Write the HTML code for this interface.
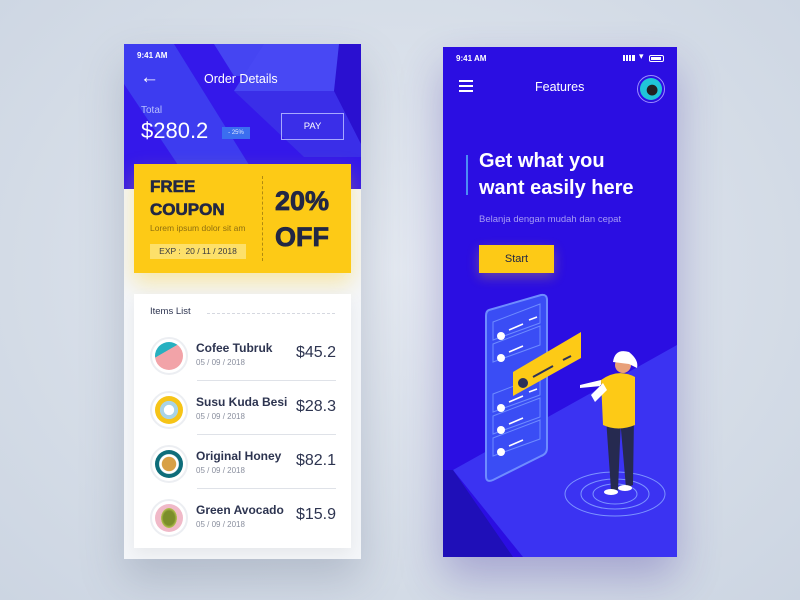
<!DOCTYPE html>
<html><head><style>
*{margin:0;padding:0;box-sizing:border-box}
body{width:800px;height:600px;overflow:hidden;background:radial-gradient(ellipse at 50% 45%,#e4e9f1 0%,#d3dbe6 70%,#ccd5e2 100%);font-family:"Liberation Sans",sans-serif;position:relative}
.a{position:absolute}
.p1{left:124px;top:44px;width:237px;height:515px;background:#f4f6f9;overflow:hidden;box-shadow:0 20px 40px rgba(80,90,120,.25)}
.p2{left:443px;top:47px;width:234px;height:510px;background:#2b0ee2;overflow:hidden;box-shadow:0 20px 40px rgba(60,40,160,.3)}
.w{color:#fff}
.item{position:absolute;left:26px;width:186px;height:54px}
.ic{position:absolute;left:0;top:0;width:38px;height:38px;border-radius:50%;border:2px solid #eceef2;background:#fff}
.ic i{position:absolute;left:3px;top:3px;width:28px;height:28px;border-radius:50%}
.nm{position:absolute;left:46px;top:4px;font-size:12px;font-weight:bold;color:#2d3450}
.dt{position:absolute;left:46px;top:21px;font-size:8px;color:#8a8f9e}
.pr{position:absolute;right:0;top:7px;font-size:16px;color:#2d3450}
.ln{position:absolute;left:47px;right:0;top:43px;height:1px;background:#dfe2e8}
</style></head><body>
<div class="a p1">
 <svg class="a" style="left:0;top:0" width="237" height="145">
  <rect width="237" height="145" fill="#3418ea"/>
  <polygon points="0,0 50,0 140,145 70,145 0,40" fill="#3d3cf0"/>
  <polygon points="120,0 237,0 237,0 200,0 165,32 110,32" fill="#4a4af4"/>
  <polygon points="90,0 237,0 237,0 220,0 180,32 110,32" fill="#4545f2"/>
  <polygon points="140,0 237,0 237,15 210,47 110,47" fill="#4848f4"/>
  <polygon points="110,47 210,47 237,80 237,113 180,113" fill="#3a2ee8"/>
  <polygon points="215,0 237,0 237,100 210,47" fill="#2a10d0"/>
 </svg>
 <div class="a w" style="left:13px;top:7px;font-size:8px;font-weight:bold">9:41 AM</div>
 <div class="a w" style="left:16px;top:23px;font-size:19px">&#8592;</div>
 <div class="a w" style="left:80px;top:28px;font-size:12.5px">Order Details</div>
 <div class="a" style="left:17px;top:61px;font-size:10px;color:#b8c0ff">Total</div>
 <div class="a w" style="left:17px;top:74px;font-size:22px">$280.2</div>
 <div class="a" style="left:98px;top:83px;width:28px;height:12px;background:#3b6ef0;color:#dfe8ff;font-size:6px;text-align:center;line-height:12px">- 25%</div>
 <div class="a w" style="left:157px;top:69px;width:63px;height:27px;border:1px solid #a7a8ff;font-size:9.5px;text-align:center;line-height:25px">PAY</div>
 <div class="a" style="left:10px;top:120px;width:217px;height:109px;background:#fdca16;box-shadow:0 10px 20px rgba(253,202,22,.35)">
  <div class="a" style="left:16px;top:11px;font-size:17px;font-weight:bold;color:#222744;line-height:23px;-webkit-text-stroke:0.6px #222744">FREE<br>COUPON</div>
  <div class="a" style="left:16px;top:59px;font-size:8.5px;color:#8f6f10">Lorem ipsum dolor sit am</div>
  <div class="a" style="left:16px;top:80px;width:96px;height:15px;background:#fde06a;font-size:8.5px;color:#3a3a40;text-align:center;line-height:15px">EXP :&nbsp; 20 / 11 / 2018</div>
  <div class="a" style="left:128px;top:12px;height:85px;border-left:1px dashed #b08a10"></div>
  <div class="a" style="left:141px;top:19px;font-size:27px;font-weight:bold;color:#222744;line-height:36px;-webkit-text-stroke:0.8px #222744">20%<br>OFF</div>
 </div>
 <div class="a" style="left:10px;top:250px;width:217px;height:254px;background:#fff;box-shadow:0 6px 16px rgba(0,0,0,.06)">
  <div class="a" style="left:16px;top:12px;font-size:9.5px;color:#2d3450">Items List</div>
  <div class="a" style="left:73px;top:19px;width:128px;border-top:1px dashed #d5d8e0"></div>
  <div class="item" style="top:43px;left:16px"><div class="ic"><i style="background:linear-gradient(150deg,#27b0c0 35%,#f2a3a8 36%)"></i></div><div class="nm">Cofee Tubruk</div><div class="dt">05 / 09 / 2018</div><div class="pr">$45.2</div><div class="ln"></div></div>
  <div class="item" style="top:97px;left:16px"><div class="ic"><i style="background:radial-gradient(circle,#fff 25%,#a9d3e6 27%,#a9d3e6 45%,#f6c417 47%)"></i></div><div class="nm">Susu Kuda Besi</div><div class="dt">05 / 09 / 2018</div><div class="pr">$28.3</div><div class="ln"></div></div>
  <div class="item" style="top:151px;left:16px"><div class="ic"><i style="background:radial-gradient(circle,#d8a046 35%,#fff 38%,#fff 48%,#0e6d7a 52%)"></i></div><div class="nm">Original Honey</div><div class="dt">05 / 09 / 2018</div><div class="pr">$82.1</div><div class="ln"></div></div>
  <div class="item" style="top:205px;left:16px"><div class="ic"><i style="background:radial-gradient(ellipse 40% 50% at 50% 50%,#7b8e2a 50%,#b6c254 70%,#f0b9c8 72%)"></i></div><div class="nm">Green Avocado</div><div class="dt">05 / 09 / 2018</div><div class="pr">$15.9</div></div>
 </div>
</div>

<div class="a p2">
 <div class="a w" style="left:13px;top:7px;font-size:8px;font-weight:bold">9:41 AM</div>
 <div class="a" style="left:180px;top:8px;width:12px;height:6px;background:linear-gradient(90deg,#fff 0 2px,transparent 2px 3px,#fff 3px 5px,transparent 5px 6px,#fff 6px 8px,transparent 8px 9px,#fff 9px)"></div>
 <div class="a w" style="left:196px;top:4px;font-size:9px">&#9662;</div>
 <div class="a" style="left:206px;top:8px;width:15px;height:7px;border:1px solid #fff;border-radius:2px;padding:1px"><div style="background:#fff;width:10px;height:3px"></div></div>
 <div class="a" style="left:16px;top:33px;width:14px;height:12px;border-top:2px solid #fff;border-bottom:2px solid #fff"><div style="margin-top:3px;height:2px;background:#fff"></div></div>
 <div class="a w" style="left:92px;top:33px;font-size:12.5px">Features</div>
 <div class="a" style="left:194px;top:28px;width:28px;height:28px;border-radius:50%;border:1px solid #9c8cff;padding:2px"><div style="width:22px;height:22px;border-radius:50%;background:radial-gradient(circle at 55% 55%,#222 30%,#20c5d8 33%)"></div></div>
 <div class="a" style="left:23px;top:108px;width:2px;height:40px;background:#4c8df5"></div>
 <div class="a w" style="left:36px;top:101px;font-size:20px;font-weight:bold;line-height:27px">Get what you<br>want easily here</div>
 <div class="a" style="left:36px;top:167px;font-size:9.5px;color:#a79cf5">Belanja dengan mudah dan cepat</div>
 <div class="a" style="left:36px;top:198px;width:75px;height:28px;background:#fdca16;color:#222744;font-size:11px;text-align:center;line-height:28px;box-shadow:0 4px 12px rgba(253,202,22,.3)">Start</div>
 <svg class="a" style="left:0;top:233px" width="234" height="277" viewBox="0 0 234 277">
  <polygon points="10,190 234,65 234,277 80,277" fill="#3b33f2"/>
  <polygon points="10,190 0,190 0,277 70,277" fill="#1f0fb8"/>
  <ellipse cx="172" cy="214" rx="50" ry="22" fill="none" stroke="#7c93ff" stroke-width="1"/>
  <ellipse cx="172" cy="214" rx="34" ry="15" fill="none" stroke="#7c93ff" stroke-width="1"/>
  <ellipse cx="172" cy="214" rx="22" ry="10" fill="none" stroke="#7c93ff" stroke-width="1"/>
  <path d="M46,30 L98,15 Q104,14 104,20 L104,168 Q104,174 98,176 L50,200 Q43,203 43,196 L43,36 Q43,31 46,30Z" fill="#3a4df5" stroke="#6e8cff" stroke-width="2"/>
  <g fill="none" stroke="#6e8cff" stroke-width="1">
   <path d="M50,42 L97,24 L97,43 L50,60Z"/><path d="M50,64 L97,46 L97,65 L50,82Z"/>
   <path d="M50,114 L97,96 L97,115 L50,132Z"/><path d="M50,136 L97,118 L97,137 L50,154Z"/><path d="M50,158 L97,140 L97,159 L50,176Z"/>
  </g>
  <g fill="#fff">
   <circle cx="58" cy="56" r="4"/><circle cx="58" cy="78" r="4"/><circle cx="58" cy="128" r="4"/><circle cx="58" cy="150" r="4"/><circle cx="58" cy="172" r="4"/>
  </g>
  <g stroke="#fff" stroke-width="1.5"><line x1="66" y1="50" x2="80" y2="44"/><line x1="66" y1="72" x2="80" y2="66"/><line x1="66" y1="122" x2="80" y2="116"/><line x1="66" y1="144" x2="80" y2="138"/><line x1="66" y1="166" x2="80" y2="160"/><line x1="86" y1="40" x2="94" y2="37"/><line x1="86" y1="112" x2="94" y2="109"/></g>
  <polygon points="70,92 138,52 138,78 70,116" fill="#fdca16"/>
  <circle cx="80" cy="103" r="5" fill="#2d3158"/>
  <line x1="90" y1="97" x2="110" y2="86" stroke="#2d3158" stroke-width="2"/>
  <line x1="120" y1="80" x2="128" y2="76" stroke="#2d3158" stroke-width="2"/>
  <path d="M177,138 L191,138 L190,205 L183,208Z M163,138 L178,138 L175,210 L168,210Z" fill="#262a50"/>
  <path d="M158,100 Q175,88 192,97 L192,145 Q175,152 160,145Z" fill="#fdca16"/>
  <path d="M160,103 L148,115 L152,122 L164,110Z M137,105 L158,100 L158,106 L137,108Z" fill="#fff"/>
  <circle cx="180" cy="85" r="8" fill="#e8a07a"/>
  <path d="M170,82 Q172,68 186,72 Q196,80 194,88 L186,84Z" fill="#fff"/>
  <ellipse cx="168" cy="212" rx="7" ry="3" fill="#fff"/><ellipse cx="182" cy="208" rx="7" ry="3" fill="#fff"/>
 </svg>
</div>
</body></html>
